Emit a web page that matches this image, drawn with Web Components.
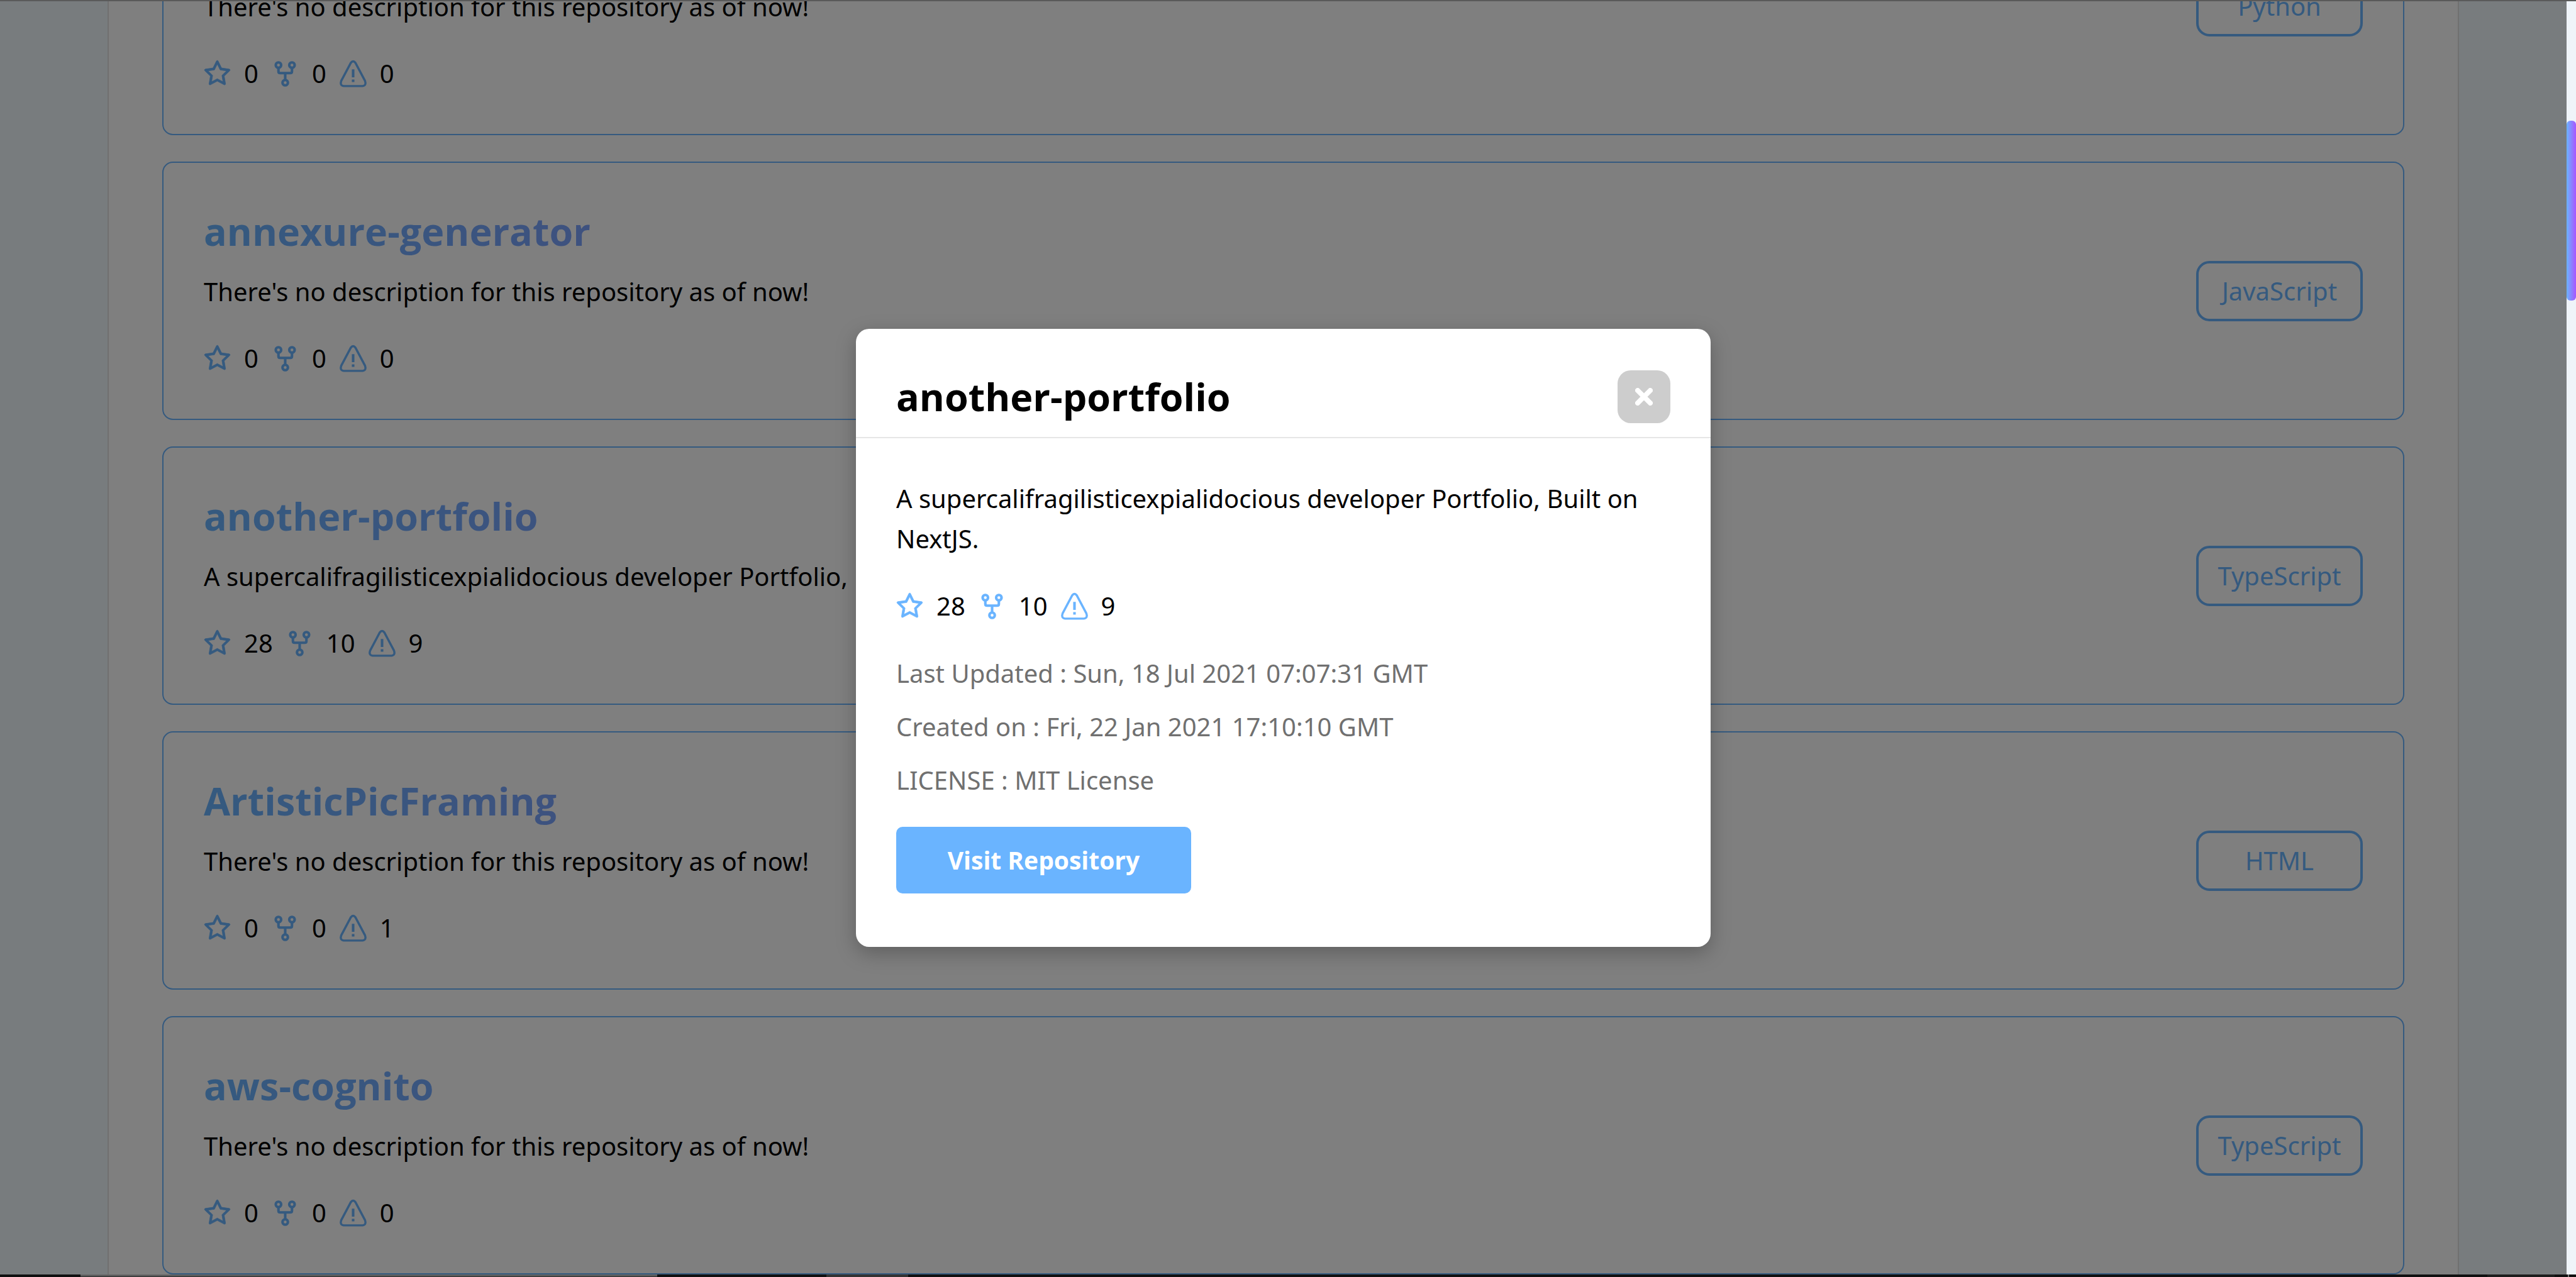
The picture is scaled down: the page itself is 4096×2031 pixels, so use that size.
<!DOCTYPE html>
<html lang="en">
<head>
<meta charset="utf-8">
<title>Repositories</title>
<style>
html, body { margin: 0; height: 100%; overflow: hidden; background: #f1f9fd; }
body { font: 40px/64px "Noto Sans", "Open Sans", sans-serif; color: #000; }
</style>
</head>
<body>
<app-window></app-window>
<script>
const ICONS = {
  star: '<svg viewBox="64 64 896 896" fill="currentColor" stroke="currentColor" stroke-width="16"><path d="M908.1 353.1l-253.900-36.900L540.700 86.100c-3.100-6.300-8.200-11.400-14.500-14.500-15.800-7.800-35-1.300-42.900 14.500L369.800 316.200l-253.900 36.900c-7 1-13.400 4.300-18.300 9.300a32.050 32.050 0 0 0 .6 45.300l183.700 179.100-43.400 252.900a31.950 31.950 0 0 0 46.400 33.700L512 754l227.100 119.400c6.200 3.300 13.400 4.400 20.300 3.200 17.400-3 29.100-19.500 26.100-36.900l-43.400-252.900 183.700-179.100c5-4.900 8.300-11.300 9.300-18.300 2.700-17.500-9.500-33.700-27-36.300zM664.800 561.600l36.100 210.300L512 672.700 323.100 772l36.100-210.300-152.800-149L417.600 382 512 190.700 606.400 382l211.200 30.700-152.800 148.900z"/></svg>',
  fork: '<svg viewBox="0 0 20 20" fill="none" stroke="currentColor" stroke-width="1.900"><circle cx="5" cy="3.500" r="2"/><circle cx="15" cy="3.500" r="2"/><circle cx="10" cy="16.500" r="2"/><path d="M5 5.500V8.100Q5 9.400 6.300 9.400H13.700Q15 9.400 15 8.100V5.500M10 9.400V14.500"/></svg>',
  alert: '<svg viewBox="0 0 20 20" fill="none" stroke="currentColor" stroke-width="1.600"><path d="M8.300 1.800Q10 -.4 11.700 1.800L18.800 15.200Q20 18.600 17 19H3Q0 18.600 1.200 15.200Z" stroke-linejoin="round"/><path d="M10 6.600V12.600M10 14.200V16" stroke-width="1.900"/></svg>'
};
const KINDS = ['star', 'fork', 'alert'];

function define(name, html, init) {
  const tpl = document.createElement('template');
  tpl.innerHTML = html;
  customElements.define(name, class extends HTMLElement {
    connectedCallback() {
      if (this.shadowRoot) return;
      this.attachShadow({ mode: 'open' }).append(tpl.content.cloneNode(true));
      if (init) init(this, this.shadowRoot);
    }
  });
}

define('repo-stats', `
<style>
:host { display: flex; align-items: center; gap: 21px; height: 64px; }
svg { width: 43px; height: 43px; color: #6ab4ff; flex: none; display: block; overflow: visible; }
</style>`, (el, root) => {
  KINDS.forEach(k => {
    root.append(document.createRange().createContextualFragment(ICONS[k]));
    const s = document.createElement('span');
    s.textContent = el.getAttribute(k);
    root.append(s);
  });
});

define('repo-card', `
<style>
:host { display: flex; justify-content: space-between; align-items: center; box-sizing: border-box;
  border: 2px solid #6ab4ff; border-radius: 17px; padding: 64px; }
h2 { margin: 0 0 19px; font-family: "Open Sans", sans-serif; font-size: 61px; line-height: 90px; font-weight: 700; color: transparent;
  background: linear-gradient(90deg, #6ab4ff, #879aff); background-clip: text; -webkit-background-clip: text; }
p { margin: 0 0 42px; }
.lang { box-sizing: border-box; width: 265px; border: 4px solid #6ab4ff; border-radius: 21px; padding: 12px 0;
  text-align: center; color: #6ab4ff; flex: none; }
</style>
<div class="info"><h2></h2><p><slot></slot></p></div>
<div class="lang"></div>`, (el, root) => {
  root.querySelector('h2').textContent = el.getAttribute('name');
  root.querySelector('.lang').textContent = el.getAttribute('lang-name');
  const s = document.createElement('repo-stats');
  KINDS.forEach(k => s.setAttribute(k, el.getAttribute(k)));
  root.querySelector('.info').append(s);
});

define('repo-list', `
<style>
:host { display: flex; flex-direction: column; justify-content: flex-end; gap: 42px; flex: 1;
  margin: 0 171px; padding: 0 85px; background: #fff; border: solid #e0e0e0; border-width: 0 2px; }
</style><slot></slot>`);

define('scroll-rail', `
<style>
:host { display: block; width: 15px; background: #eff4f9; flex: none; padding-top: 190px; box-sizing: border-box; }
div { height: 286px; border-radius: 6px; background: linear-gradient(90deg, #6ab4ff, #a855ff); }
</style><div></div>`);

define('task-strip', `
<style>
:host { display: flex; height: 4px; background: #101010; padding: 0 11px 0 128px; flex: none; }
.a { width: 917px; background: #404040; border-top: 2px solid #666; box-sizing: border-box; margin-right: 269px; }
.b { width: 130px; background: #333; }
.c { width: 107px; background: #1c1c1c; margin: 0 21px 0 auto; }
.d { width: 2px; background: #777; }
</style><div class="a"></div><div class="b"></div><div class="c"></div><div class="d"></div>`);

define('repo-dialog', `
<style>
:host { display: block; box-sizing: border-box; width: 1359px; background: #fff; border-radius: 21px;
  box-shadow: 0 10px 32px rgba(0,0,0,.25); overflow: hidden; }
header { display: flex; justify-content: space-between; align-items: center; padding: 64px 64px 21px; border-bottom: 2px solid #e6e6e6; }
h1 { margin: 0; font-family: "Open Sans", sans-serif; font-size: 61px; line-height: 87px; font-weight: 700; }
button { width: 84px; height: 84px; border: 0; border-radius: 21px; background: #cdcdcd; padding: 0; display: grid; place-items: center; }
button svg { width: 28px; height: 28px; }
section { padding: 64px 64px 85px; }
p { margin: 0; }
repo-stats { margin: 43px 0; }
.meta { color: #707070; margin-bottom: 21px; }
a { display: inline-block; margin-top: 21px; box-sizing: border-box; width: 469px; padding: 21px 0; line-height: 64px; border-radius: 10px;
  text-align: center; font-family: "Open Sans", sans-serif; font-weight: 700; font-size: 39px; color: #fff; background: #6ab4ff; text-decoration: none; vertical-align: top; }
</style>
<header><h1>another-portfolio</h1><button aria-label="Close"><svg viewBox="0 0 28 28"><path d="M4 4L24 24M24 4L4 24" stroke="#fff" stroke-width="8" stroke-linecap="round"/></svg></button></header>
<section>
<p>A supercalifragilisticexpialidocious developer Portfolio, Built on NextJS.</p>
<repo-stats star="28" fork="10" alert="9"></repo-stats>
<p class="meta">Last Updated : Sun, 18 Jul 2021 07:07:31 GMT</p>
<p class="meta">Created on : Fri, 22 Jan 2021 17:10:10 GMT</p>
<p class="meta">LICENSE : MIT License</p>
<a href="#">Visit Repository</a>
</section>`);

define('app-window', `
<style>
:host { display: flex; flex-direction: column; height: 100vh; overflow: hidden; }
.main { flex: 1; display: flex; min-height: 0; }
.view { flex: 1; display: flex; position: relative; overflow: hidden; align-items: flex-end; }
.veil { position: absolute; inset: 0; background: rgba(0,0,0,.5); display: grid; place-items: center; }
.edge { height: 2px; background: #5a5a5a; flex: none; }
</style>
<div class="edge"></div>
<div class="main">
<div class="view">
<repo-list>
<repo-card name="AndroidApp" lang-name="Python" star="0" fork="0" alert="0">There's no description for this repository as of now!</repo-card>
<repo-card name="annexure-generator" lang-name="JavaScript" star="0" fork="0" alert="0">There's no description for this repository as of now!</repo-card>
<repo-card name="another-portfolio" lang-name="TypeScript" star="28" fork="10" alert="9">A supercalifragilisticexpialidocious developer Portfolio,</repo-card>
<repo-card name="ArtisticPicFraming" lang-name="HTML" star="0" fork="0" alert="1">There's no description for this repository as of now!</repo-card>
<repo-card name="aws-cognito" lang-name="TypeScript" star="0" fork="0" alert="0">There's no description for this repository as of now!</repo-card>
</repo-list>
<div class="veil"><repo-dialog></repo-dialog></div>
</div>
<scroll-rail></scroll-rail>
</div>
<task-strip></task-strip>`);
</script>
</body>
</html>
